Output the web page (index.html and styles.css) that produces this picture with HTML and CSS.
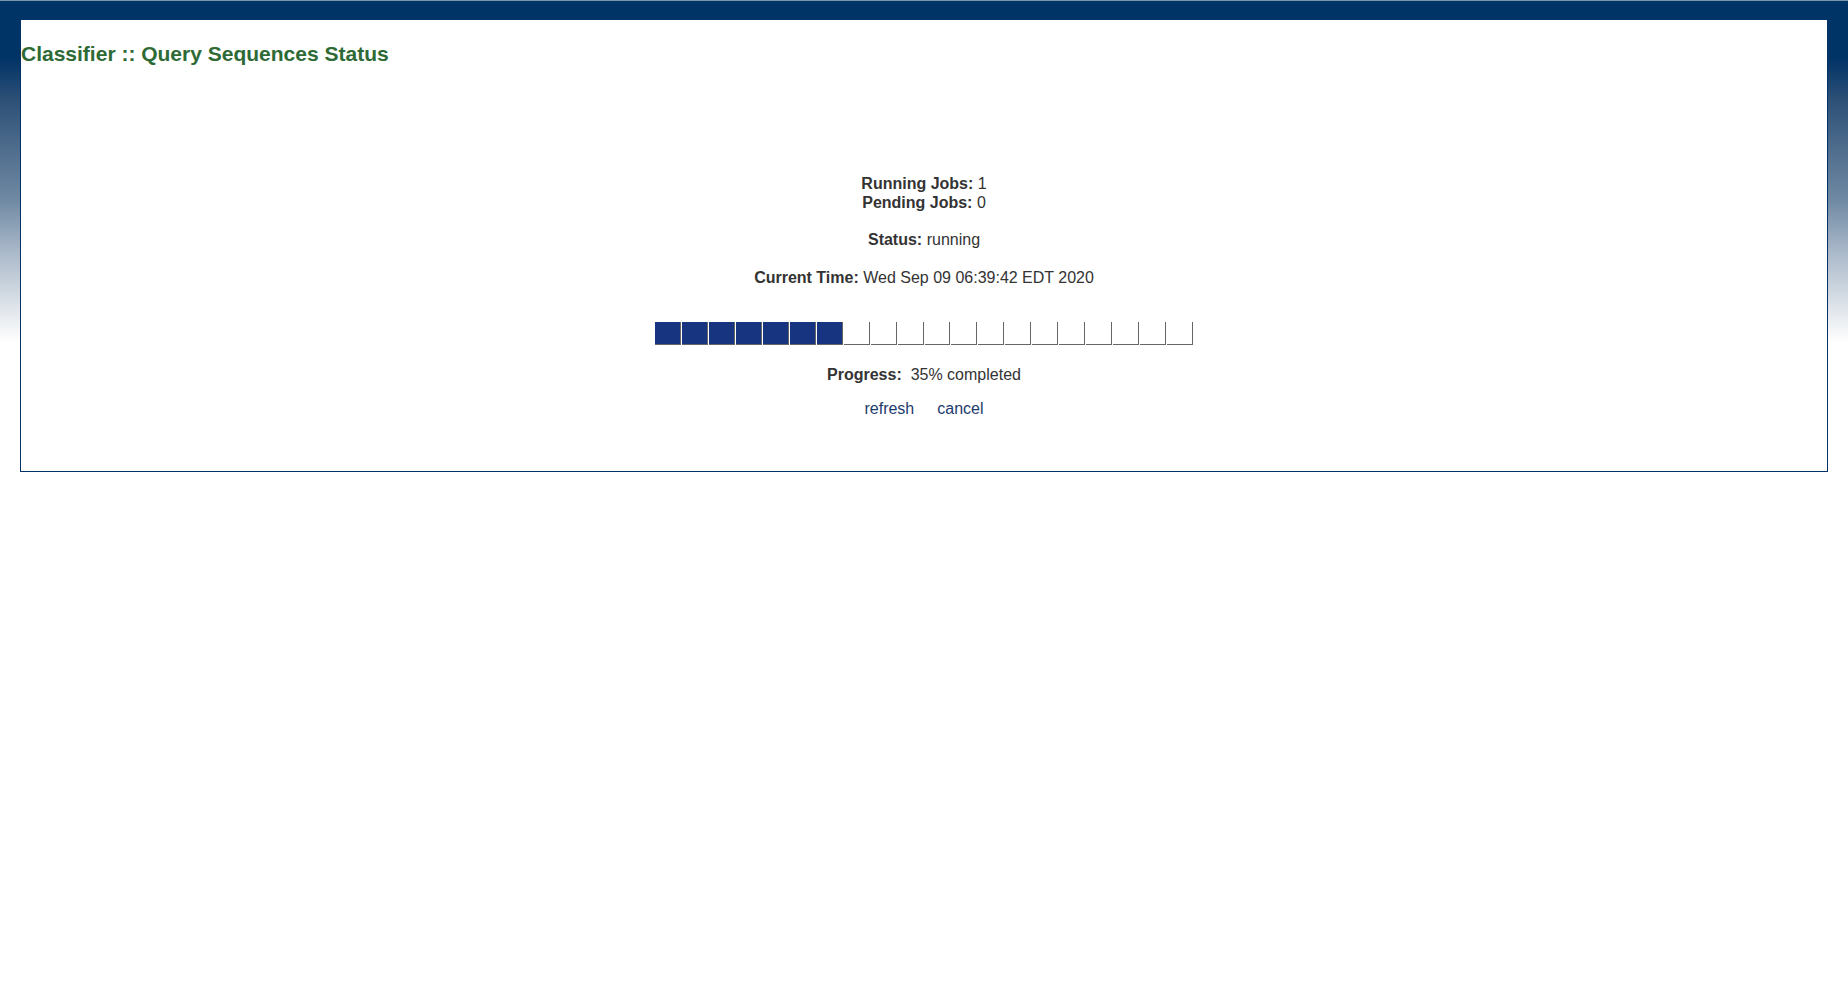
FILE: index.html
```html
<!DOCTYPE html>
<html>
<head>
<meta charset="utf-8">
<title>Classifier :: Query Sequences Status</title>
<link rel="stylesheet" href="styles.css">
</head>
<body>
<div class="page">
  <div class="box">
    <h1 class="title">Classifier :: Query Sequences Status</h1>
    <div class="status">
      <div class="jobs">
        <div class="line"><span class="label">Running Jobs:</span> 1</div>
        <div class="line"><span class="label">Pending Jobs:</span> 0</div>
      </div>
      <div class="line state"><span class="label">Status:</span> running</div>
      <div class="line time"><span class="label">Current Time:</span> Wed Sep 09 06:39:42 EDT 2020</div>
      <div class="bar">
        <div class="cell on"></div><div class="cell on"></div><div class="cell on"></div><div class="cell on"></div><div class="cell on"></div><div class="cell on"></div><div class="cell on"></div>
        <div class="cell"></div><div class="cell"></div><div class="cell"></div><div class="cell"></div><div class="cell"></div><div class="cell"></div><div class="cell"></div><div class="cell"></div><div class="cell"></div><div class="cell"></div><div class="cell"></div><div class="cell"></div><div class="cell"></div>
      </div>
      <div class="line progress"><span class="label">Progress:</span>&nbsp; 35% completed</div>
      <div class="line links"><a href="#" class="link">refresh</a><a href="#" class="link">cancel</a></div>
    </div>
  </div>
</div>
</body>
</html>
```
FILE: styles.css
```css
html, body {
  margin: 0;
  padding: 0;
}
body {
  font-family: "Liberation Sans", Arial, sans-serif;
  color: #333;
  background-color: #fff;
  background-image: linear-gradient(to bottom,
    #7d96b0 0px, #7d96b0 1px,
    #003366 1px, #003366 58px,
    #2d5077 100px, #4f6d8d 150px, #6f89a3 200px,
    #a8b7c8 250px, #d7dee6 300px, #ffffff 342px);
  background-repeat: no-repeat;
  background-size: 100% 345px;
  min-height: 982px;
}
.page {
  padding: 19px 20px 0 20px;
}
.box {
  background: #fff;
  border: 1px solid #003366;
  height: 451px;
}
.title {
  margin: 22px 0 0 0;
  font-size: 21px;
  line-height: 24px;
  font-weight: bold;
  color: #2e6a35;
}
.status {
  display: flex;
  flex-direction: column;
  align-items: center;
  font-size: 16px;
  margin-top: 108px;
}
.jobs {
  display: flex;
  flex-direction: column;
  align-items: center;
}
.line {
  line-height: 19px;
  white-space: nowrap;
}
.label {
  font-weight: bold;
}
.state {
  margin-top: 18px;
}
.time {
  margin-top: 19px;
}
.bar {
  margin-top: 35px;
  width: 538px;
  display: grid;
  grid-template-columns: repeat(20, 1fr);
  column-gap: 1px;
}
.cell {
  height: 22px;
  border-right: 1px solid #666;
  border-bottom: 1px solid #666;
  background: #fff;
}
.cell.on {
  background: #16347f;
}
.progress {
  margin-top: 20px;
}
.links {
  margin-top: 15px;
  display: flex;
  gap: 23px;
}
.link {
  color: #1c3b6c;
  text-decoration: none;
}
```
